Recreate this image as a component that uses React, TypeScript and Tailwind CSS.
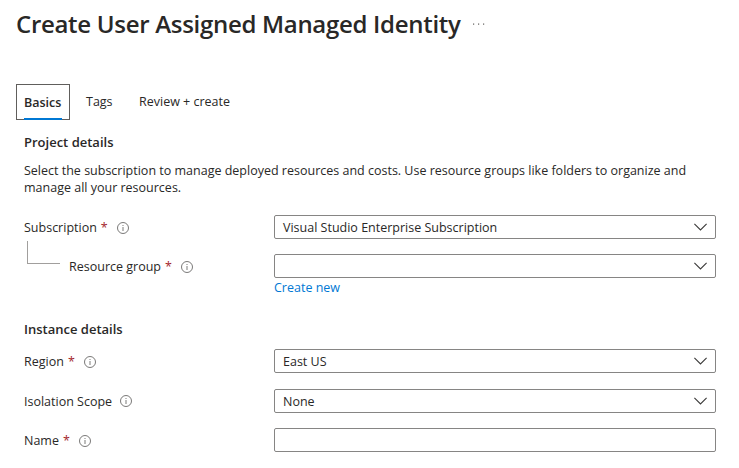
import type { ReactNode } from 'react';

function InfoIcon() {
  return (
    <svg className="block shrink-0" width="12" height="12" viewBox="0 0 12 12" fill="none">
      <circle cx="6" cy="6" r="5.5" stroke="#6b6a69" strokeWidth="0.9" />
      <rect x="5.5" y="5" width="1" height="4" fill="#7d7c7b" />
      <rect x="5.5" y="3" width="1" height="1" fill="#7d7c7b" />
    </svg>
  );
}

function Chevron() {
  return (
    <svg className="block shrink-0" width="13" height="8" viewBox="0 0 13 8" fill="none">
      <path d="M0.4 0.9L6.5 7L12.6 0.9" stroke="#3b3a39" strokeWidth="1.1" />
    </svg>
  );
}

function Label({ text, required = false, className = '' }: { text: string; required?: boolean; className?: string }) {
  return (
    <div className="flex h-6 items-center">
      <span className={`whitespace-nowrap ${className}`}>{text}</span>
      {required && <span className="ml-1 w-[7px] text-[#a4262c]">*</span>}
      <span className={required ? 'ml-[9px] mt-0.5' : 'ml-2'}>
        <InfoIcon />
      </span>
    </div>
  );
}

function Field({ children, chevron = true }: { children?: ReactNode; chevron?: boolean }) {
  return (
    <div className="flex h-6 w-[442px] items-center justify-between rounded-[2px] border border-[#868584] pr-2 pl-2">
      <span>{children}</span>
      {chevron && <Chevron />}
    </div>
  );
}

export default function App() {
  return (
    <div className="h-[468px] w-[739px] overflow-hidden bg-white font-['Open_Sans','Noto_Sans',sans-serif] text-[12.5px] leading-[17px] text-[#292827]">
      <header className="flex h-[84px] items-start pt-2 pl-4">
        <h1 className="w-[431px] text-[24px] leading-8 font-semibold tracking-[-0.3px] whitespace-nowrap">
          Create User Assigned Managed Identity
        </h1>
        <svg className="mt-[15px] ml-[26px]" width="12" height="2" viewBox="0 0 12 2" fill="#605e5c">
          <rect x="0" y="0.5" width="1.2" height="1.2" />
          <rect x="5" y="0.5" width="1.2" height="1.2" />
          <rect x="10" y="0.5" width="1.2" height="1.2" />
        </svg>
      </header>
      <nav className="flex h-9 pl-4 leading-[36px]">
        <div className="relative w-[54px] border border-[#605e5c] pl-[7px] leading-[36px] font-semibold">
          Basics
          <span className="absolute -bottom-px left-[7px] h-0.5 w-[38px] bg-[#0078d4]" />
        </div>
        <span className="ml-4 w-[53px]">Tags</span>
        <span>Review + create</span>
      </nav>
      <main className="pl-6">
        <h2 className="pt-[14px] text-[13px] leading-[17px] font-semibold">Project details</h2>
        <p className="mt-[11px] h-[53px] leading-[17px] whitespace-nowrap">
          Select the subscription to manage deployed resources and costs. Use resource groups like folders to organize and
          <br />
          manage all your resources.
        </p>
        <div className="flex h-[39px]">
          <div className="w-[250px]">
            <Label text="Subscription" required />
            <div className="mt-0.5 ml-[3px] h-[23px] w-[33px] border-b border-l border-[#a19f9d]" />
          </div>
          <Field>Visual Studio Enterprise Subscription</Field>
        </div>
        <div className="flex h-[67px]">
          <div className="w-[250px] pl-[45px]">
            <Label text="Resource group" required />
          </div>
          <div>
            <Field />
            <a className="mt-px block text-[#0078d4]">Create new</a>
          </div>
        </div>
        <h2 className="h-[28px] text-[13px] leading-[17px] font-semibold">Instance details</h2>
        <div className="flex h-10">
          <div className="w-[250px]">
            <Label text="Region" required />
          </div>
          <Field>East US</Field>
        </div>
        <div className="flex h-[39px]">
          <div className="w-[250px]">
            <Label text="Isolation Scope" />
          </div>
          <Field>None</Field>
        </div>
        <div className="flex">
          <div className="w-[250px]">
            <Label text="Name" required />
          </div>
          <Field chevron={false} />
        </div>
      </main>
    </div>
  );
}
